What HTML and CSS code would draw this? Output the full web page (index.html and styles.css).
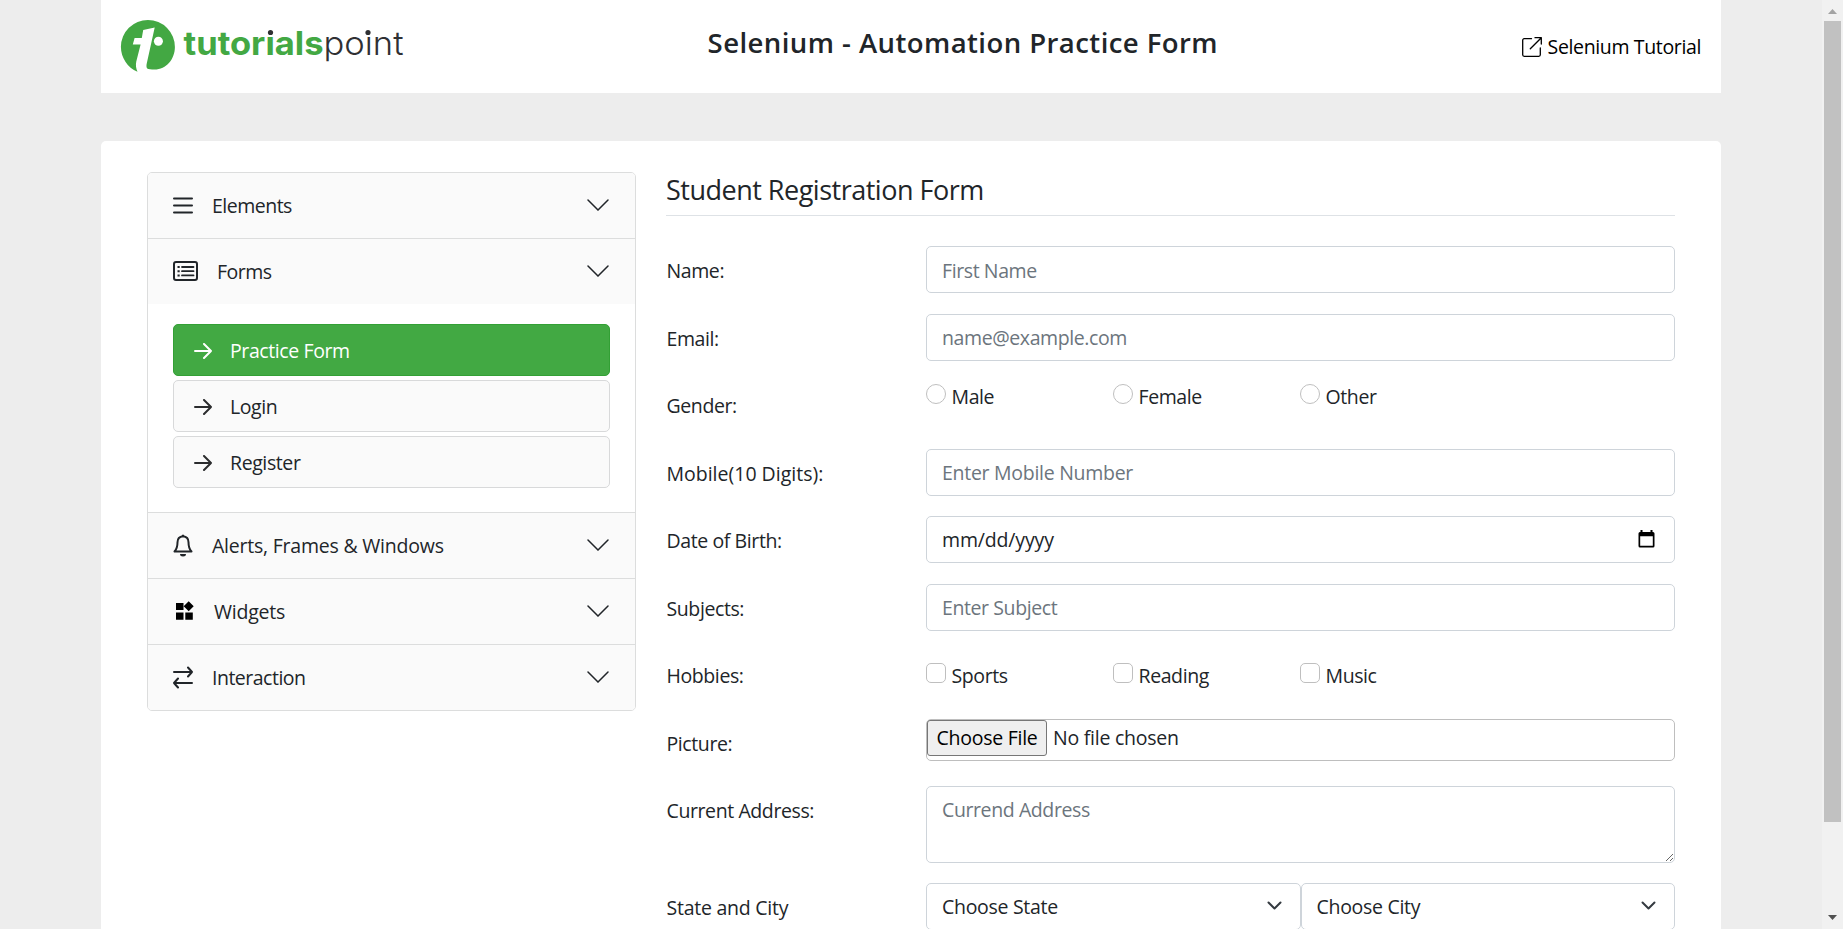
FILE: index.html
```html
<!DOCTYPE html>
<html lang="en">
<head>
<meta charset="utf-8">
<title>Selenium Practice - Student Form</title>
<link rel="stylesheet" href="styles.css">
</head>
<body>
<div class="page">
  <header class="header">
    <svg class="logo" width="290" height="60" viewBox="0 0 290 60" role="img" aria-label="tutorialspoint">
      <path fill="#43a843" d="M17.5 55.7C7.500 52 .9 41.500.9 30.800A27 27 0 1 1 54.900 31C54.900 43 46.500 53.600 34.500 53.600C31 53.600 28.500 53 27.200 52.400C26.300 51.500 26.300 49.500 26.800 47.300L34.700 11.500L23.200 14L21.800 22H14.600L12.800 28.400H20.600L16.300 45.500C15.500 49 16 52.500 17.500 55.700Z"/>
      <circle cx="38.400" cy="25.300" r="4.500" fill="#fff"/>
      <text class="logo-bold" x="63.500" y="38.600" textLength="140" lengthAdjust="spacingAndGlyphs">tutorials</text>
      <text class="logo-light" x="203.500" y="38.600" textLength="80" lengthAdjust="spacingAndGlyphs">point</text>
      <rect x="145" y="11" width="12" height="9" fill="#fff"/>
      <rect x="244" y="11" width="9" height="9" fill="#fff"/>
      <circle cx="150.500" cy="16.500" r="2.600" fill="#2f3033"/>
      <circle cx="248" cy="16.500" r="2.600" fill="#2f3033"/>
    </svg>
    <h1 class="title">Selenium - Automation Practice Form</h1>
    <a class="tutorial">
      <svg width="20" height="20" viewBox="0 0 20 20" fill="none" stroke="currentColor" stroke-width="1.300" stroke-linecap="round" stroke-linejoin="round"><path d="M9.500 1.700H2.200A1.500 1.500 0 0 0 .7 3.200v14.600a1.500 1.500 0 0 0 1.500 1.500h14.600a1.500 1.500 0 0 0 1.500-1.500V11M8.300 11.700L19.300.7M13 .7h6.300V7"/></svg>
      <span>Selenium Tutorial</span>
    </a>
  </header>

  <main class="card">
    <nav class="accordion">
      <div class="item head">
        <svg width="20" height="20" viewBox="0 0 20 20"><path d="M1 3.500h18M1 10.500h18M1 17.500h18" stroke="#212529" stroke-width="2" stroke-linecap="round"/></svg>
        <span class="name">Elements</span>
        <svg class="chev" width="22" height="12" viewBox="0 0 22 12"><path d="M1 1l10 10L21 1"/></svg>
      </div>
      <div class="item head">
        <svg width="25" height="20" viewBox="0 0 25 20" fill="none" stroke="#212529"><rect x="1" y="1" width="23" height="18" rx="2" stroke-width="2"/><path d="M9 6h11.500M9 10.200h11.500M9 14.400h11.500" stroke-width="1.800" stroke-linecap="round"/><path d="M4.500 6h2.200M4.500 10.200h2.200M4.500 14.400h2.200" stroke-width="2"/></svg>
        <span class="name">Forms</span>
        <svg class="chev" width="22" height="12" viewBox="0 0 22 12"><path d="M1 1l10 10L21 1"/></svg>
      </div>
      <div class="sub">
        <a class="link active"><svg width="18" height="16" viewBox="0 0 18 16"><path d="M1 8h16M10 1l7 7l-7 7"/></svg><span>Practice Form</span></a>
        <a class="link"><svg width="18" height="16" viewBox="0 0 18 16"><path d="M1 8h16M10 1l7 7l-7 7"/></svg><span>Login</span></a>
        <a class="link"><svg width="18" height="16" viewBox="0 0 18 16"><path d="M1 8h16M10 1l7 7l-7 7"/></svg><span>Register</span></a>
      </div>
      <div class="item head">
        <svg width="20" height="23" viewBox="0 0 20 23"><path d="M10 2.200C6.500 2.500 4.500 5 4.500 8.300C4.500 12 3.500 15.500 1.500 17.500H18.500C16.500 15.500 15.500 12 15.500 8.300C15.500 5 13.500 2.500 10 2.200Z" fill="none" stroke="#212529" stroke-width="2" stroke-linejoin="round"/><path d="M7 20h6a3 2.500 0 0 1-6 0zM8.700 2a1.300 1.600 0 0 1 2.600 0z" fill="#212529"/></svg>
        <span class="name wide">Alerts, Frames &amp; Windows</span>
        <svg class="chev" width="22" height="12" viewBox="0 0 22 12"><path d="M1 1l10 10L21 1"/></svg>
      </div>
      <div class="item head">
        <svg width="22" height="20" viewBox="0 0 22 20"><path d="M3 2h7.500v7H3zM3 11.500h7.500v7.300H3zM12.300 11.500h7.500v7.300h-7.500zM15.700.3l5 5l-5 5l-5-5z"/></svg>
        <span class="name wide">Widgets</span>
        <svg class="chev" width="22" height="12" viewBox="0 0 22 12"><path d="M1 1l10 10L21 1"/></svg>
      </div>
      <div class="item head">
        <svg width="20" height="23" viewBox="0 0 20 23" fill="none" stroke="#212529" stroke-width="2" stroke-linecap="round" stroke-linejoin="round"><path d="M1 6h18M15 1.500L19 6l-4 4.500M19 17H1M5 12.500L1 17l4 4.500"/></svg>
        <span class="name">Interaction</span>
        <svg class="chev" width="22" height="12" viewBox="0 0 22 12"><path d="M1 1l10 10L21 1"/></svg>
      </div>
    </nav>

    <form class="form">
      <h2 class="form-title">Student Registration Form</h2>
      <div class="row"><label>Name:</label><input class="control" type="text" placeholder="First Name"></div>
      <div class="row"><label>Email:</label><input class="control" type="email" placeholder="name@example.com"></div>
      <div class="row"><label>Gender:</label>
        <div class="choices radios">
          <label class="choice"><i class="radio"></i><span>Male</span></label>
          <label class="choice"><i class="radio"></i><span>Female</span></label>
          <label class="choice"><i class="radio"></i><span>Other</span></label>
        </div>
      </div>
      <div class="row"><label class="mobile">Mobile(10 Digits):</label><input class="control number" type="text" placeholder="Enter Mobile Number"></div>
      <div class="row"><label>Date of Birth:</label>
        <div class="control date"><span>mm/dd/yyyy</span>
          <svg width="17" height="18" viewBox="0 0 17 18"><path fill="#000" fill-rule="evenodd" d="M2.500 0h2v2h8V0h2v2h.5a1.500 1.500 0 0 1 1.500 1.500v12.500a1.500 1.500 0 0 1-1.500 1.500H2a1.500 1.500 0 0 1-1.500-1.500V3.500A1.500 1.500 0 0 1 2 2h.5zM2.200 6.200v9.600h12.600V6.200z"/></svg>
        </div>
      </div>
      <div class="row"><label>Subjects:</label><input class="control" type="text" placeholder="Enter Subject"></div>
      <div class="row"><label>Hobbies:</label>
        <div class="choices">
          <label class="choice"><i class="check"></i><span>Sports</span></label>
          <label class="choice"><i class="check"></i><span>Reading</span></label>
          <label class="choice"><i class="check"></i><span>Music</span></label>
        </div>
      </div>
      <div class="row"><label>Picture:</label>
        <div class="file"><button type="button">Choose File</button><span>No file chosen</span></div>
      </div>
      <div class="row tall"><label>Current Address:</label>
        <textarea class="control area" placeholder="Currend Address"></textarea>
      </div>
      <div class="row"><label class="state">State and City</label>
        <div class="selects">
          <div class="control select"><span>Choose State</span><svg width="15" height="10" viewBox="0 0 15 10"><path d="M1.500 1.500l6 6l6-6"/></svg></div>
          <div class="control select"><span>Choose City</span><svg width="15" height="10" viewBox="0 0 15 10"><path d="M1.500 1.500l6 6l6-6"/></svg></div>
        </div>
      </div>
    </form>
  </main>
</div>
<aside class="scrollbar">
  <svg width="9" height="5" viewBox="0 0 9 5"><path d="M0 5L4.500 0L9 5z" fill="#a3a3a3"/></svg>
  <div class="thumb"></div>
  <svg class="down" width="9" height="5" viewBox="0 0 9 5"><path d="M0 0L4.500 5L9 0z" fill="#505050"/></svg>
</aside>
</body>
</html>
```

FILE: styles.css
```css
* { box-sizing: border-box; }
body {
  margin: 0;
  display: flex;
  height: 929px;
  overflow: hidden;
  background: #ededed;
  color: #212529;
  font: 19.500px/30px "Open Sans", "Noto Sans", sans-serif;
  letter-spacing: -0.4px;
}
.page { flex: 1; padding: 0 101px; min-width: 0; }
.header {
  height: 93px;
  margin-bottom: 48px;
  padding: 0 20px 0 19px;
  background: #fff;
  display: flex;
  justify-content: space-between;
  align-items: flex-start;
}
.logo { margin-top: 16px; flex: none; }
.logo-bold { font: 700 33px Inter, sans-serif; fill: #43a843; letter-spacing: 0; }
.logo-light { font: 300 33px Inter, sans-serif; fill: #2f3033; letter-spacing: 0; }
.title { margin: 25px 6px 0 0; font-size: 27.500px; line-height: 36px; font-weight: 600; letter-spacing: 0.44px; }
.tutorial { display: flex; align-items: center; gap: 6px; margin-top: 32px; color: #000; letter-spacing: -0.36px; }
.tutorial svg { flex: none; }

.card {
  display: flex;
  align-items: flex-start;
  height: 800px;
  padding: 31px 46px 0;
  background: #fff;
  border-radius: 5px;
}
.accordion {
  width: 489px;
  flex: none;
  margin-right: 30px;
  border: 1px solid #dcdddd;
  border-radius: 5px;
  overflow: hidden;
}
.item {
  height: 66px;
  padding: 0 26px 1px 25px;
  display: flex;
  align-items: center;
  background: #fafafa;
  border-top: 1px solid #dcdddd;
}
.item:first-child { border-top: 0; height: 65px; }
.name { margin-left: 19px; margin-top: 2px; letter-spacing: -0.5px; }
.name.wide { letter-spacing: -0.22px; }
.chev { margin-left: auto; fill: none; stroke: #212529; stroke-width: 1.500; stroke-linecap: round; }
.sub { height: 208px; padding: 20px 25px 0; display: flex; flex-direction: column; gap: 4px; }
.link {
  height: 52px;
  display: flex;
  align-items: center;
  gap: 18px;
  padding: 2px 20px 0;
  border: 1px solid #d8d9da;
  border-radius: 5px;
  background: #fafafa;
}
.link svg { fill: none; stroke: #2b2c2e; stroke-width: 2; stroke-linecap: round; stroke-linejoin: round; }
.link.active { background: #42a943; border-color: #33a035; color: #fff; }
.link.active svg { stroke: #fff; }

.form { width: 1009px; flex: none; }
.form-title {
  margin: 0 0 30.250px;
  height: 44px;
  border-bottom: 1px solid #dee2e6;
  font-size: 27px;
  line-height: 36px;
  font-weight: 400;
  letter-spacing: -0.5px;
}
.row { display: flex; height: 67.500px; }
.row.tall { height: 97px; }
.row > label { width: 260px; padding: 10px 0 0 0.500px; flex: none; }
.row > .mobile { letter-spacing: 0; }
.row > .state { letter-spacing: -0.25px; }
.control {
  flex: 1;
  min-width: 0;
  height: 47px;
  padding: 1px 15px 0;
  border: 1px solid #ced4da;
  border-radius: 5px;
  background: #fff;
  color: #212529;
  font: inherit;
  letter-spacing: inherit;
}
.control::placeholder { color: #6c757d; opacity: 1; }
.number { letter-spacing: -0.28px; }
.date, .select { display: flex; align-items: center; justify-content: space-between; }
.date { padding-right: 19px; letter-spacing: -0.15px; }
.date svg { margin-top: -2px; }
.choices { display: flex; flex: 1; padding-top: 12px; }
.radios { padding-top: 3px; }
.choice { width: 187px; display: flex; align-items: flex-start; gap: 5.500px; }
.choice span { margin-top: -2px; }
.radio, .check { width: 20px; height: 20px; border: 1px solid #bfbfbf; border-radius: 5px; background: #fff; }
.radio { border-radius: 50%; }
.file {
  flex: 1;
  height: 42px;
  display: flex;
  align-items: flex-start;
  border: 1px solid #bebebe;
  border-radius: 5px;
}
.file button {
  width: 120px;
  height: 36px;
  padding: 0;
  border: 1px solid #767676;
  border-radius: 3px;
  background: #efefef;
  color: #000;
  font: inherit;
  letter-spacing: -0.25px;
}
.file span { margin: 3px 0 0 6px; letter-spacing: -0.25px; }
.area { height: 77px; padding-top: 8px; }
.selects { display: flex; flex: 1; }
.select { letter-spacing: -0.3px; }
.select svg { fill: none; stroke: #343a40; stroke-width: 2; stroke-linecap: round; stroke-linejoin: round; margin: -3px 3px 0 0; }

.scrollbar {
  width: 21px;
  flex: none;
  background: #f1f1f1;
  display: flex;
  flex-direction: column;
  align-items: center;
  padding: 9px 0;
}
.thumb { width: 17px; height: 801px; margin-top: 7px; background: #c1c1c1; }
.down { margin-top: auto; }
```
